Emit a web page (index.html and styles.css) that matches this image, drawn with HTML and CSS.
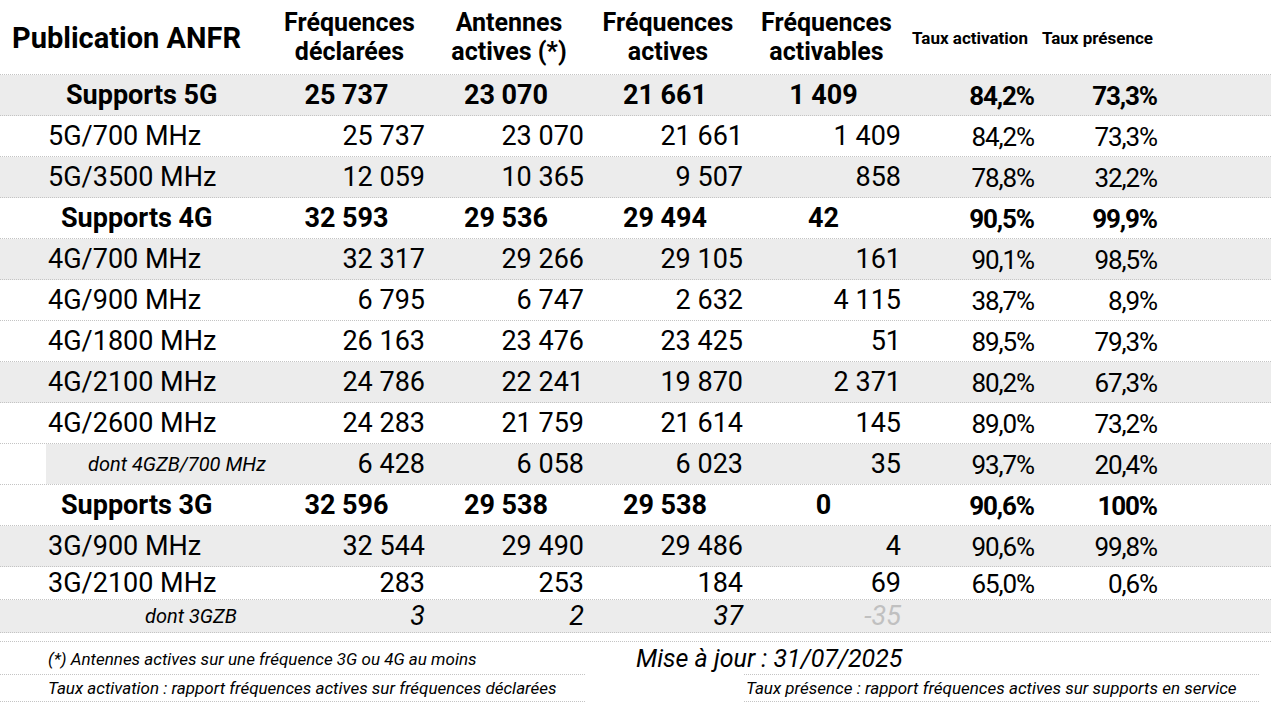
FILE: index.html
```html
<!DOCTYPE html>
<html lang="fr">
<head>
<meta charset="utf-8">
<title>Publication ANFR</title>
<link rel="stylesheet" href="styles.css">
</head>
<body>
<div class="sheet">
  <div class="row head">
    <div class="title">Publication ANFR</div>
    <div class="h2">Fréquences<br>déclarées</div>
    <div class="h2">Antennes<br>actives (*)</div>
    <div class="h2">Fréquences<br>actives</div>
    <div class="h2">Fréquences<br>activables</div>
    <div class="hs">Taux activation</div>
    <div class="hs">Taux présence</div>
  </div>

  <div class="row bold gray">
    <div class="lab sup5">Supports 5G</div>
    <div class="n">25 737</div><div class="n">23 070</div><div class="n">21 661</div><div class="n">1 409</div>
    <div class="p">84,2%</div><div class="p">73,3%</div>
  </div>
  <div class="row">
    <div class="lab">5G/700 MHz</div>
    <div class="n">25 737</div><div class="n">23 070</div><div class="n">21 661</div><div class="n">1 409</div>
    <div class="p">84,2%</div><div class="p">73,3%</div>
  </div>
  <div class="row gray">
    <div class="lab">5G/3500 MHz</div>
    <div class="n">12 059</div><div class="n">10 365</div><div class="n">9 507</div><div class="n">858</div>
    <div class="p">78,8%</div><div class="p">32,2%</div>
  </div>

  <div class="row bold">
    <div class="lab sup">Supports 4G</div>
    <div class="n">32 593</div><div class="n">29 536</div><div class="n">29 494</div><div class="n">42</div>
    <div class="p">90,5%</div><div class="p">99,9%</div>
  </div>
  <div class="row gray">
    <div class="lab">4G/700 MHz</div>
    <div class="n">32 317</div><div class="n">29 266</div><div class="n">29 105</div><div class="n">161</div>
    <div class="p">90,1%</div><div class="p">98,5%</div>
  </div>
  <div class="row">
    <div class="lab">4G/900 MHz</div>
    <div class="n">6 795</div><div class="n">6 747</div><div class="n">2 632</div><div class="n">4 115</div>
    <div class="p">38,7%</div><div class="p">8,9%</div>
  </div>
  <div class="row">
    <div class="lab">4G/1800 MHz</div>
    <div class="n">26 163</div><div class="n">23 476</div><div class="n">23 425</div><div class="n">51</div>
    <div class="p">89,5%</div><div class="p">79,3%</div>
  </div>
  <div class="row gray">
    <div class="lab">4G/2100 MHz</div>
    <div class="n">24 786</div><div class="n">22 241</div><div class="n">19 870</div><div class="n">2 371</div>
    <div class="p">80,2%</div><div class="p">67,3%</div>
  </div>
  <div class="row">
    <div class="lab">4G/2600 MHz</div>
    <div class="n">24 283</div><div class="n">21 759</div><div class="n">21 614</div><div class="n">145</div>
    <div class="p">89,0%</div><div class="p">73,2%</div>
  </div>
  <div class="row sub4">
    <div class="subwrap">
      <div class="lab sublab">dont 4GZB/700 MHz</div>
      <div class="n">6 428</div><div class="n">6 058</div><div class="n">6 023</div><div class="n">35</div>
      <div class="p">93,7%</div><div class="p">20,4%</div>
    </div>
  </div>

  <div class="row bold">
    <div class="lab sup">Supports 3G</div>
    <div class="n">32 596</div><div class="n">29 538</div><div class="n">29 538</div><div class="n">0</div>
    <div class="p">90,6%</div><div class="p">100%</div>
  </div>
  <div class="row gray">
    <div class="lab">3G/900 MHz</div>
    <div class="n">32 544</div><div class="n">29 490</div><div class="n">29 486</div><div class="n">4</div>
    <div class="p">90,6%</div><div class="p">99,8%</div>
  </div>
  <div class="row short">
    <div class="lab">3G/2100 MHz</div>
    <div class="n">283</div><div class="n">253</div><div class="n">184</div><div class="n">69</div>
    <div class="p">65,0%</div><div class="p">0,6%</div>
  </div>
  <div class="row short gray ital">
    <div class="lab sublab3">dont 3GZB</div>
    <div class="n">3</div><div class="n">2</div><div class="n">37</div><div class="n neg">-35</div>
    <div class="p"></div><div class="p"></div>
  </div>

  <div class="foot1">
    <div class="note">(*) Antennes actives sur une fréquence 3G ou 4G au moins</div>
    <div class="maj">Mise à jour : 31/07/2025</div>
  </div>
  <div class="foot2">
    <div class="fl">Taux activation : rapport fréquences actives sur fréquences déclarées</div>
    <div class="fr">Taux présence : rapport fréquences actives sur supports en service</div>
  </div>
</div>
</body>
</html>
```

FILE: styles.css
```css
html, body {
  margin: 0;
  padding: 0;
  background: #ffffff;
}
body {
  font-family: Roboto, "Liberation Sans", sans-serif;
  color: #000;
  width: 1271px;
  height: 710px;
  overflow: hidden;
}
.sheet {
  display: flex;
  flex-direction: column;
}
.row, .subwrap {
  display: grid;
  grid-template-columns: 268px 160px 159px 159px 158px 132px 123px 1fr;
  align-items: center;
}
.row {
  height: 40px;
  border-bottom: 1px dotted #c4c4c4;
  font-size: 27px;
}
.row.gray { background: #ececec; }
.row.short { height: 32px; }

.head {
  height: 74px;
  font-weight: 700;
}
.title {
  font-size: 29px;
  padding-left: 12px;
  padding-top: 1px;
  white-space: nowrap;
}
.h2 {
  font-size: 25px;
  line-height: 29px;
  text-align: center;
  padding-top: 0;
  padding-left: 3px;
  white-space: nowrap;
}
.hs {
  font-size: 17px;
  text-align: center;
  padding-top: 2px;
  white-space: nowrap;
}

.lab { padding-left: 48px; white-space: nowrap; }
.n { text-align: right; padding-right: 3px; white-space: nowrap; }
.p {
  text-align: right;
  padding-right: 2px;
  padding-top: 1px;
  font-size: 26px;
  letter-spacing: -1.1px;
  white-space: nowrap;
}
.bold { font-weight: 700; }
.bold .n { text-align: center; }
.bold .lab.sup { padding-left: 61px; }
.bold .lab.sup5 { padding-left: 66px; }

.sub4 { display: block; }
.subwrap {
  height: 40px;
  margin-left: 46px;
  background: #ececec;
  grid-template-columns: 222px 160px 159px 159px 158px 132px 123px 1fr;
}
.sublab {
  font-style: italic;
  font-size: 20px;
  padding-left: 42px;
}
.ital .n { font-style: italic; }
.sublab3 {
  font-style: italic;
  font-size: 20px;
  padding-left: 145px;
}
.neg { color: #c0c0c0; }

.foot1 {
  margin-top: 8px;
  height: 32px;
  border-top: 1px dotted #c4c4c4;
  display: grid;
  grid-template-columns: 636px 1fr;
  align-items: center;
  font-style: italic;
}
.note { font-size: 17px; padding-left: 48px; padding-top: 2px; white-space: nowrap; }
.maj { font-size: 25px; white-space: nowrap; }
.foot2 {
  display: grid;
  grid-template-columns: 585px 159px 515px;
  grid-template-areas: "l . r";
  font-style: italic;
  font-size: 17px;
}
.fl, .fr {
  height: 26px;
  line-height: 26px;
  border-top: 1px dotted #c4c4c4;
  border-bottom: 1px dotted #c4c4c4;
  white-space: nowrap;
}
.fl { grid-area: l; padding-left: 48px; }
.fr { grid-area: r; padding-left: 2px; }
```
